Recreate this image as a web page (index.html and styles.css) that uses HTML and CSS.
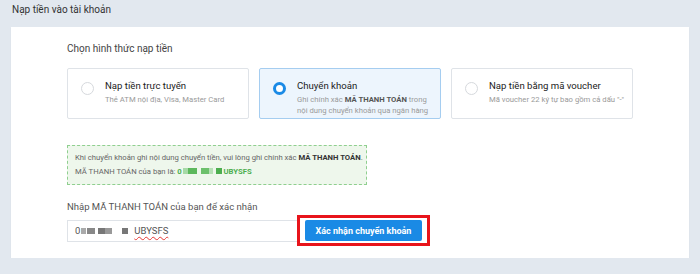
FILE: index.html
```html
<!DOCTYPE html>
<html lang="vi">
<head>
  <meta charset="UTF-8" />
  <title>Nạp tiền vào tài khoản</title>
  <link rel="stylesheet" href="styles.css">
</head>
<body>
  <h1 class="page-title">Nạp tiền vào tài khoản</h1>

  <div class="card">
    <h2 class="section-title">Chọn hình thức nạp tiền</h2>

    <div class="options">
      <div class="option">
        <span class="radio"></span>
        <div class="option-text">
          <div class="option-name">Nạp tiền trực tuyến</div>
          <div class="option-desc">Thẻ ATM nội địa, Visa, Master Card</div>
        </div>
      </div>
      <div class="option active">
        <span class="radio"></span>
        <div class="option-text">
          <div class="option-name">Chuyển khoản</div>
          <div class="option-desc">Ghi chính xác <b>MÃ THANH TOÁN</b> trong<br>nội dung chuyển khoản qua ngân hàng</div>
        </div>
      </div>
      <div class="option">
        <span class="radio"></span>
        <div class="option-text">
          <div class="option-name">Nạp tiền bằng mã voucher</div>
          <div class="option-desc">Mã voucher 22 ký tự bao gồm cả dấu "-"</div>
        </div>
      </div>
    </div>

    <div class="notice">
      <p>Khi chuyển khoản ghi nội dung chuyển tiền, vui lòng ghi chính xác <b>MÃ THANH TOÁN</b>.</p>
      <p>MÃ THANH TOÁN của bạn là: <span class="code">0<span class="blur g1"></span><span class="blur g2"></span> <span class="blur g3"></span><span class="blur g4"></span> <span class="blur g5"></span> UBYSFS</span></p>
    </div>

    <label class="confirm-label" for="payCode">Nhập MÃ THANH TOÁN của bạn để xác nhận</label>
    <div class="confirm-row">
      <div class="code-input" id="payCode">0<span class="blur k1"></span><span class="blur k2"></span><span class="blur k3"></span><span class="blur k4"></span><span class="blur k5"></span><span class="typo">UBYSFS</span></div>
      <div class="highlight">
        <button class="btn-confirm">Xác nhận chuyển khoản</button>
      </div>
    </div>
  </div>
</body>
</html>
```

FILE: styles.css
```css
body {
  margin: 0;
  padding: 0 11px;
  background: #e2e8ef;
  font-family: Roboto, "Noto Sans", Arial, sans-serif;
  color: #333;
}
.page-title {
  margin: 0;
  padding: 3px 1px 0;
  height: 24px;
  font-size: 10px;
  font-weight: 400;
  line-height: 14px;
  color: #333;
}
.card {
  background: #fff;
  height: 231px;
  padding: 14px 56px 0;
  box-sizing: border-box;
  box-shadow: 0 1px 1px rgba(0,0,0,0.08);
}
.section-title {
  margin: 0 0 11px;
  font-size: 10px;
  font-weight: 400;
  line-height: 16px;
  color: #444;
}
.options {
  display: flex;
  gap: 10px;
}
.option {
  flex: 1;
  height: 51px;
  box-sizing: border-box;
  border: 1px solid #dfe3e8;
  border-radius: 2px;
  display: flex;
  align-items: flex-start;
  padding: 10px 6px 0 13px;
}
.option.active {
  background: #edf5fd;
  border-color: #a5cdf0;
}
.radio {
  flex: none;
  width: 13px;
  height: 13px;
  margin-top: 3px;
  box-sizing: border-box;
  border: 1px solid #d6d9dd;
  border-radius: 50%;
  background: #fff;
}
.active .radio {
  border: 3.5px solid #1a8ae6;
}
.option-text {
  margin-left: 11px;
  white-space: nowrap;
}
.option-name {
  font-size: 9.6px;
  line-height: 14px;
  color: #222;
}
.option-desc {
  margin-top: 1px;
  font-size: 7.7px;
  line-height: 11px;
  color: #9a9a9a;
}
.option-desc b {
  color: #555;
}
.notice {
  margin-top: 26px;
  width: 300px;
  height: 40px;
  box-sizing: border-box;
  border: 1px dashed #8fcf8f;
  background: #eef7ec;
  padding: 5px 0 0 7px;
  font-size: 7.7px;
  color: #666;
  white-space: nowrap;
}
.notice p {
  margin: 0;
  line-height: 14px;
}
.notice b {
  color: #333;
}
.code {
  font-weight: 700;
  color: #4cae4f;
}
.blur {
  display: inline-block;
  height: 6px;
  vertical-align: 0;
}
.g1 { width: 5px; background: #a6daa6; margin-left: 1px; }
.g2 { width: 9px; background: #5cb85c; }
.g3 { width: 8px; background: #6cc06c; margin-left: 2px; }
.g4 { width: 4px; background: #b5e0b5; }
.g5 { width: 6px; background: #4cae4f; margin-left: 1px; }
.confirm-label {
  display: block;
  margin-top: 16px;
  font-size: 9.5px;
  line-height: 12px;
  color: #555;
}
.confirm-row {
  display: flex;
  align-items: center;
  margin-top: 2px;
}
.code-input {
  width: 232px;
  height: 22px;
  box-sizing: border-box;
  border: 1px solid #dfe3e8;
  border-right: none;
  padding: 0 7px;
  font-size: 9.5px;
  line-height: 20px;
  color: #555;
}
.k1 { width: 5px; background: #aaa; margin-left: 1px; }
.k2 { width: 8px; background: #888; margin-left: 1px; }
.k3 { width: 7px; background: #777; margin-left: 3px; }
.k4 { width: 7px; background: #999; }
.k5 { width: 6px; background: #777; margin-left: 10px; }
.typo {
  margin-left: 6px;
  text-decoration: underline wavy #e53935;
  text-decoration-thickness: 1px;
  text-underline-offset: 2px;
}
.highlight {
  margin-left: -2px;
  border: 3px solid #e8141b;
  padding: 2px 5px;
}
.btn-confirm {
  display: block;
  width: 117px;
  height: 21px;
  border: none;
  border-radius: 2px;
  background: #1a8ae5;
  color: #fff;
  font-family: inherit;
  font-size: 9px;
  font-weight: 700;
  cursor: pointer;
}
```
